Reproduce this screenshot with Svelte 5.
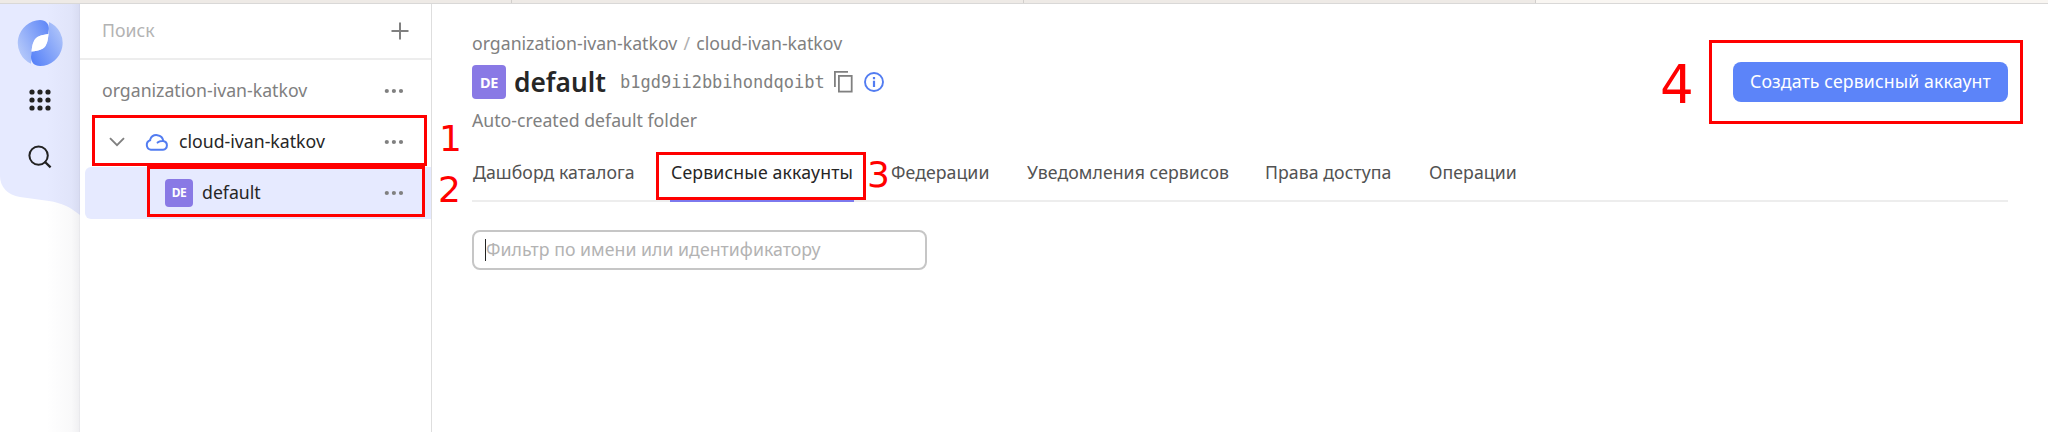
<script>
  const tabs = [
    { label: 'Дашборд каталога', width: 162 },
    { label: 'Сервисные аккаунты', width: 184, active: true },
    { label: 'Федерации', width: 100 },
    { label: 'Уведомления сервисов', width: 202 },
    { label: 'Права доступа', width: 128 },
    { label: 'Операции', width: 90 }
  ];
  const dots = [0, 1, 2];
</script>

{#snippet more()}
  <svg class="more" width="20" height="6" viewBox="0 0 20 6">
    {#each dots as d}
      <circle cx={2.8 + d * 7.1} cy="3" r="2.1" />
    {/each}
  </svg>
{/snippet}

<div class="screen">
  <div class="browser">
    <i></i><i></i><i></i><i class="current"></i>
  </div>
  <div class="body">
    <nav class="rail">
      <svg class="rail-bg" width="80" height="428" viewBox="0 0 80 428">
        <defs>
          <linearGradient id="edge" x1="0" x2="1" y1="0" y2="0">
            <stop offset="0" stop-color="#303050" stop-opacity="0" />
            <stop offset="0.75" stop-color="#303050" stop-opacity="0.03" />
            <stop offset="0.96" stop-color="#303050" stop-opacity="0.07" />
            <stop offset="1" stop-color="#303050" stop-opacity="0.13" />
          </linearGradient>
        </defs>
        <path d="M0 0H80V211C70 203 62 199 49 197L20 193C8 191 0 183 0 172Z" fill="#e6eaff" />
        <rect x="46" y="0" width="34" height="428" fill="url(#edge)" />
      </svg>
      <svg class="logo" width="46" height="46" viewBox="0 0 46 46">
        <defs>
          <linearGradient id="la" x1="1" y1="0.1" x2="0" y2="0.8">
            <stop offset="0" stop-color="#5f87f7" />
            <stop offset="1" stop-color="#b9ccfa" />
          </linearGradient>
          <linearGradient id="lb" x1="0" y1="0.9" x2="1" y2="0.1">
            <stop offset="0" stop-color="#5580f8" />
            <stop offset="1" stop-color="#b5c9fa" />
          </linearGradient>
        </defs>
        <path d="M23 0C29 0 32 4 32 9L31 14C24 15 19 17 17 21C15 25 15 28 14.500 31.500L14 43.800A23 23 0 0 1 23 0Z" fill="url(#la)" />
        <path d="M23 46C17 46 14 42 14 37L14.500 31.500C22 31 27 29 29 25C31 21 31 18 31.500 14.500L32 2A23 23 0 0 1 23 46Z" fill="url(#lb)" />
        <path d="M31.500 14C23 15 19 16.500 17 21C15 25 15 28 14.500 31.500C22 31 27 29 29 25C31 21 31 18 31.500 14Z" fill="#fff" />
      </svg>
      <svg class="grid" width="22" height="22" viewBox="0 0 22 22" fill="#222">
        {#each dots as r}
          {#each dots as c}
            <circle cx={3 + c * 8} cy={3 + r * 8} r="2.6" />
          {/each}
        {/each}
      </svg>
      <svg class="find" width="24" height="24" viewBox="0 0 24 24" fill="none" stroke="#222" stroke-width="2">
        <circle cx="10.600" cy="10.600" r="9.200" />
        <path d="M16.500 16.500L22.600 22.400" stroke-width="2.300" />
      </svg>
    </nav>

    <aside>
      <div class="search">
        <span>Поиск</span>
        <svg width="18" height="18" viewBox="0 0 18 18" stroke="#808080" stroke-width="2"><path d="M9 .5V17.500M.5 9H17.500" /></svg>
      </div>
      <div class="row org"><span>organization-ivan-katkov</span>{@render more()}</div>
      <div class="row cloud">
        <svg class="chev" width="16" height="10" viewBox="0 0 16 10" fill="none" stroke="#808080" stroke-width="1.900"><path d="M1 1.200L8 8.200L15 1.200" /></svg>
        <svg class="cloud-icon" width="24" height="18" viewBox="0 0 24 18" fill="none" stroke="#527cf1" stroke-width="2" stroke-linecap="round">
          <path d="M5.200 7.200A4.900 4.900 0 0 0 5.900 16.700H18A4.400 4.400 0 0 0 18.300 8A6.800 6.800 0 0 0 5.200 6.500V7.200M12.600 9.600Q14.800 7.600 18.300 8" />
        </svg>
        <span>cloud-ivan-katkov</span>{@render more()}
      </div>
      <div class="row folder">
        <b class="badge">DE</b>
        <span>default</span>{@render more()}
      </div>
    </aside>

    <main>
      <header>
        <div class="info">
          <div class="crumbs"><span>organization-ivan-katkov</span><em>/</em><span>cloud-ivan-katkov</span></div>
          <div class="title">
            <b class="badge large">DE</b>
            <h1>default</h1>
            <code>b1gd9ii2bbihondqoibt</code>
            <svg class="copy" width="19" height="22" viewBox="0 0 19 22" fill="none" stroke="#808080" stroke-width="1.800">
              <path d="M.9 16V.9H14" /><rect x="4.900" y="4.900" width="12.800" height="15.700" />
            </svg>
            <svg width="20" height="20" viewBox="0 0 20 20" fill="none" stroke="#527cf1" stroke-width="1.900">
              <circle cx="10" cy="10" r="9" /><path d="M10 8.700V15M10 5V7.300" stroke-width="2.200" />
            </svg>
          </div>
          <div class="desc">Auto-created default folder</div>
        </div>
        <button>Создать сервисный аккаунт</button>
      </header>
      <div class="tabs">
        {#each tabs as t}
          <div class="tab" class:active={t.active} style:width="{t.width}px">{t.label}</div>
        {/each}
      </div>
      <div class="filter"><span class="caret"></span>Фильтр по имени или идентификатору</div>
    </main>
  </div>

  <div class="frame f1"></div>
  <div class="frame f2"></div>
  <div class="frame f3"></div>
  <div class="frame f4"></div>
  <span class="num n1">1</span>
  <span class="num n2">2</span>
  <span class="num n3">3</span>
  <span class="num n4">4</span>
</div>

<style>
  .screen { position: relative; width: 2048px; height: 432px; overflow: hidden; background: #fff; display: flex; flex-direction: column; font: 17.7px/24px "Noto Sans", sans-serif; color: #262626; white-space: nowrap; }
  .screen :global(*) { box-sizing: border-box; }
  svg { display: block; flex: none; }
  .browser { height: 4px; flex: none; display: flex; border-bottom: 1px solid #d9d8d7; background: #eeeae6; }
  .browser i { width: 512px; border-right: 1px solid #d2cfcc; }
  .browser .current { background: #f9f6f2; border: 0; }
  .body { display: flex; flex: 1; }

  .rail { position: relative; width: 80px; flex: none; display: flex; flex-direction: column; align-items: center; }
  .rail-bg { position: absolute; left: 0; top: 0; }
  .logo, .grid, .find { position: relative; }
  .logo { margin-top: 15.5px; }
  .grid { margin-top: 23px; }
  .find { margin-top: 34.5px; }

  aside { width: 352px; flex: none; border-right: 1px solid #dedede; display: flex; flex-direction: column; }
  .search { height: 56px; border-bottom: 2px solid #ededed; display: flex; align-items: center; justify-content: space-between; padding: 0 22px 0 22px; color: #b3b3b3; }
  .search span { padding-bottom: 2px; }
  .search svg { margin-bottom: 1px; }
  .row { display: flex; align-items: center; height: 51px; padding: 0 27px 0 22px; }
  .row span { flex: 1; padding-bottom: 2px; }
  .more { fill: #808080; }
  .org { color: #808080; margin-top: 5px; }
  .cloud-icon { margin: 0 10px 0 20px; }
  .cloud { padding-left: 29px; }
  .folder { height: 52px; margin-left: 5px; padding-left: 80px; background: #e6eaff; border-radius: 6px 0 0 6px; }
  .badge { width: 28px; height: 28px; border-radius: 4px; background: #8979e5; color: #fff; font-size: 12px; font-weight: 700; display: flex; align-items: center; justify-content: center; margin-right: 9px; flex: none; letter-spacing: -0.4px; }

  main { flex: 1; padding: 27px 40px 0 40px; }
  header { display: flex; justify-content: space-between; height: 116px; color: #808080; }
  .crumbs { display: flex; height: 24px; }
  .crumbs em { font-style: normal; width: 19px; text-align: center; color: #b0b0b0; }
  .title { display: flex; align-items: center; height: 34px; margin-top: 10px; }
  .large { width: 34px; height: 34px; font-size: 14.5px; margin-right: 8px; }
  h1 { margin: 0; width: 106px; font-size: 26.3px; line-height: 34px; font-weight: 600; color: #262626; }
  code { font: 17px/24px "DejaVu Sans Mono", monospace; width: 214px; }
  .copy { margin-right: 11px; }
  .desc { margin-top: 9px; }
  button { margin-top: 31px; width: 275px; height: 40px; border: 0; border-radius: 8px; background: #5c84f9; color: #fff; font: inherit; letter-spacing: 0.12px; padding: 0 0 2px; }
  .tabs { display: flex; gap: 36px; height: 55px; border-bottom: 2px solid #ededed; }
  .tab { height: 55px; line-height: 24px; padding: 13px 0 0 1px; color: #525252; letter-spacing: 0.06px; }
  .active { color: #262626; letter-spacing: 0.14px; border-bottom: 2px solid #7d79ee; }
  .filter { position: relative; margin-top: 28px; width: 455px; height: 40px; border: 2px solid #c6c6c6; border-radius: 8px; padding: 5px 0 0 12px; color: #b3b3b3; letter-spacing: 0.03px; }
  .caret { position: absolute; left: 11px; top: 7px; width: 1px; height: 22px; background: #222; }

  .frame { position: absolute; border: 3px solid #f00; }
  .f1 { left: 92px; top: 115px; width: 335px; height: 51px; }
  .f2 { left: 147px; top: 166px; width: 278px; height: 51px; }
  .f3 { left: 656px; top: 152px; width: 210px; height: 48px; }
  .f4 { left: 1709px; top: 40px; width: 314px; height: 84px; }
  .num { position: absolute; color: #f00; font: 36px/40px "DejaVu Sans", sans-serif; }
  .n1 { left: 439px; top: 119px; }
  .n2 { left: 438px; top: 170px; }
  .n3 { left: 867px; top: 155px; }
  .n4 { left: 1660px; top: 55px; font-size: 53px; line-height: 60px; }
</style>
